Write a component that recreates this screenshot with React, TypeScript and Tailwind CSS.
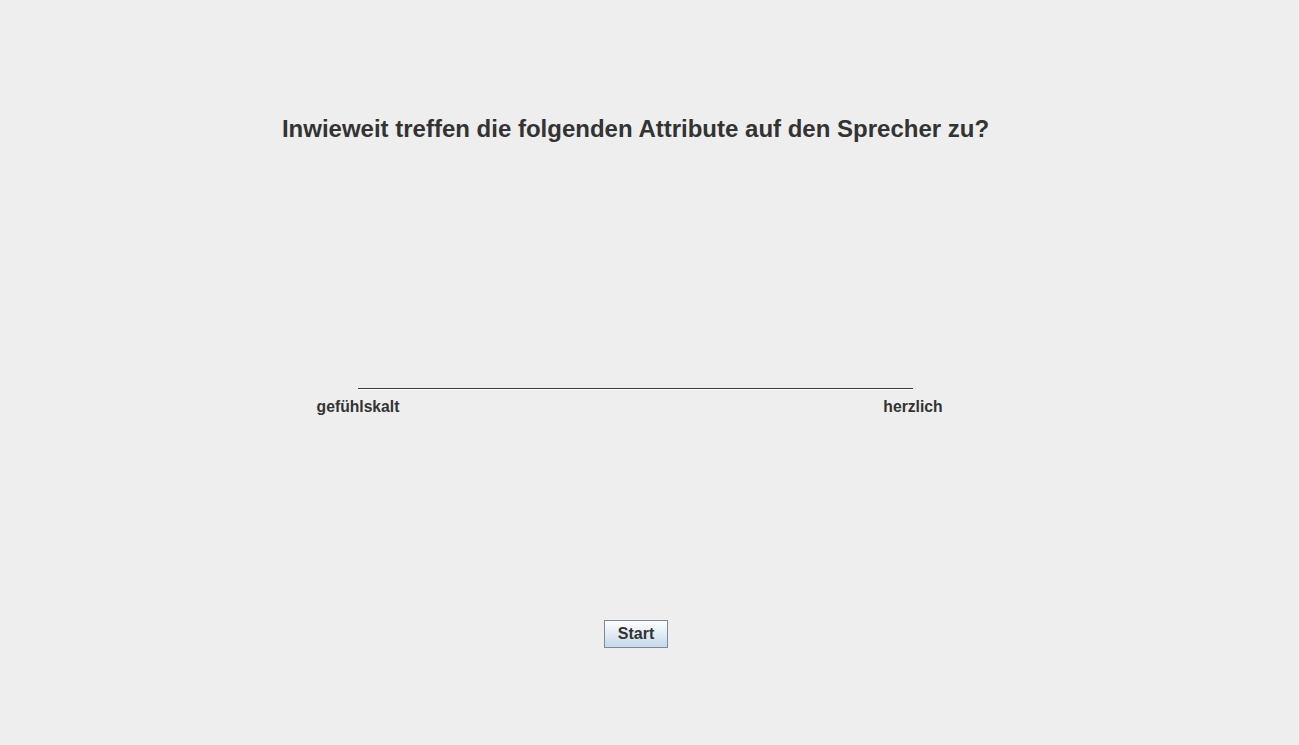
export default function App() {
  return (
    <div className="h-[745px] w-[1299px] overflow-hidden bg-[#eeeeee] font-['Liberation_Sans',Arial,sans-serif] text-[#333333]">
      <div className="flex w-[1271px] flex-col items-center">
        {/* Question */}
        <h1 className="mt-[114px] text-[24px] font-bold leading-[30px]">
          Inwieweit treffen die folgenden Attribute auf den Sprecher zu?
        </h1>

        {/* Scale */}
        <div className="mt-[244px] flex w-[555px] flex-col">
          <div className="h-px bg-[#2f3a40]" />
          <div className="h-px bg-white" />
          <div className="mt-[8px] flex justify-between text-[15.7px] font-bold leading-[18px]">
            <span className="flex w-0 justify-center whitespace-nowrap">gefühlskalt</span>
            <span className="flex w-0 justify-center whitespace-nowrap">herzlich</span>
          </div>
        </div>

        <button
          type="button"
          className="ml-[1px] mt-[204px] h-[28px] w-[64px] border border-[#7a8a99] bg-gradient-to-b from-white to-[#c5d8ea] text-[16px] font-bold leading-none text-[#333333]"
        >
          Start
        </button>
      </div>
    </div>
  )
}
